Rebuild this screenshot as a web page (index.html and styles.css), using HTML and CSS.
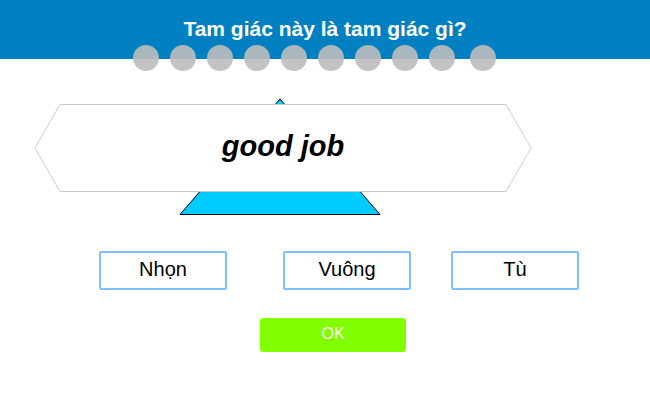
FILE: index.html
```html
<!DOCTYPE html>
<html lang="vi">
<head>
    <meta charset="UTF-8">
    <meta name="viewport" content="width=device-width, initial-scale=1.0">
    <title>Tam giác</title>
    <link rel="stylesheet" href="styles.css">
</head>
<body>
    <header class="quiz-header">
        <h1 class="quiz-title">Tam giác này là tam giác gì?</h1>
        <div class="progress">
            <span class="dot"></span>
            <span class="dot"></span>
            <span class="dot"></span>
            <span class="dot"></span>
            <span class="dot"></span>
            <span class="dot"></span>
            <span class="dot"></span>
            <span class="dot"></span>
            <span class="dot"></span>
            <span class="dot"></span>
        </div>
    </header>

    <div class="stage">
        <!-- the triangle, with the feedback banner drawn over it -->
        <svg class="figure" width="650" height="125" viewBox="0 0 650 125">
            <polygon points="280,4 180,119.5 380,119.5" fill="#00ccff" stroke="#000" stroke-width="1" />
            <polygon points="60,9.5 506,9.5 531,53 506,96.5 60,96.5 35,53" fill="#fff" stroke="#cccccc" stroke-width="1" />
        </svg>
        <p class="feedback">good job</p>
    </div>

    <div class="choices">
        <button class="choice">Nhọn</button>
        <button class="choice">Vuông</button>
        <button class="choice">Tù</button>
    </div>

    <div class="actions">
        <button class="ok-btn">OK</button>
    </div>
</body>
</html>
```

FILE: styles.css
```css
body {
    margin: 0;
    padding: 0;
    width: 650px;
    font-family: "Liberation Sans", Arial, sans-serif;
    background-color: #ffffff;
}

.quiz-header {
    height: 59px;
    background-color: #0080c0;
    padding-top: 17px;
    box-sizing: border-box;
}

.quiz-title {
    margin: 0;
    font-size: 21px;
    line-height: 24px;
    font-weight: bold;
    color: #fff;
    text-align: center;
}

.progress {
    display: flex;
    gap: 11px;
    margin-top: 4px;
    padding-left: 133px;
}

.dot {
    width: 26px;
    height: 26px;
    border-radius: 50%;
    background-color: rgba(189, 189, 189, 0.9);
}

.dot:last-child {
    margin-left: 4px;
}

.stage {
    position: relative;
    height: 125px;
    margin-top: 36px;
}

.figure {
    display: block;
}

.feedback {
    position: absolute;
    left: 35px;
    top: 34px;
    width: 496px;
    margin: 0;
    font-size: 29px;
    line-height: 34px;
    font-weight: bold;
    font-style: italic;
    color: #000;
    text-align: center;
}

.choices {
    display: flex;
    margin-top: 31px;
    padding-left: 99px;
}

.choice {
    width: 128px;
    height: 39px;
    padding: 0 0 2px;
    box-sizing: border-box;
    border: 2px solid #7fbfff;
    border-radius: 2px;
    background-color: #fff;
    font-family: inherit;
    font-size: 20px;
    line-height: 33px;
    color: #000;
    cursor: pointer;
}

.choice:nth-child(1) {
    margin-right: 56px;
}

.choice:nth-child(2) {
    margin-right: 40px;
}

.actions {
    margin-top: 28px;
    padding-left: 260px;
}

.ok-btn {
    display: block;
    width: 146px;
    height: 34px;
    padding: 0 0 3px;
    border: none;
    border-radius: 3px;
    background-color: #80ff00;
    font-family: inherit;
    font-size: 16px;
    line-height: 31px;
    color: #fff;
    cursor: pointer;
}
```
